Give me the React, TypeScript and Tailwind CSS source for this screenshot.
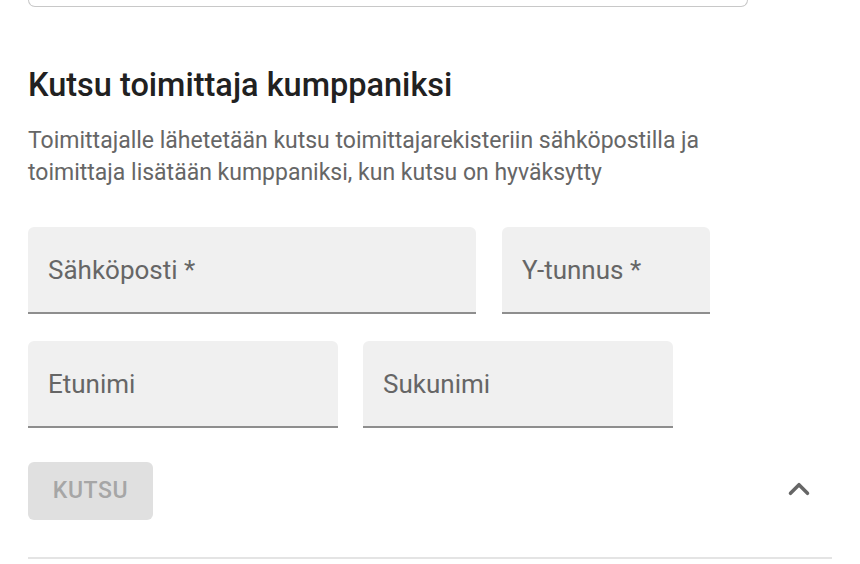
import { ChevronUp } from "lucide-react";

const Field = ({ label, className }: { label: string; className: string }) => (
  <div
    className={`h-[87px] bg-[#f0f0f0] rounded-t-[6px] border-b-2 border-[#8e8e8e] flex items-center px-[20px] ${className}`}
  >
    <span className="text-[26px] text-[#666666] leading-none">{label}</span>
  </div>
);

const App = () => {
  return (
    <div
      className="w-[860px] h-[564px] bg-white overflow-hidden relative"
      style={{ fontFamily: "Roboto, 'Liberation Sans', sans-serif" }}
    >
      <div className="px-[28px]">
        <div className="w-[720px] h-[8px] -mt-[1px] border border-t-0 border-[#c8c8c8] rounded-b-[7px]" />

        <h1 className="mt-[58px] text-[32.5px] leading-[40px] font-medium text-[#212121]">
          Kutsu toimittaja kumppaniksi
        </h1>
        <p className="mt-[20px] text-[23px] leading-[32px] text-[#666666]">
          Toimittajalle lähetetään kutsu toimittajarekisteriin sähköpostilla ja
          <br />
          toimittaja lisätään kumppaniksi, kun kutsu on hyväksytty
        </p>

        <div className="mt-[38px] flex gap-[26px]">
          <Field label="Sähköposti *" className="w-[448px]" />
          <Field label="Y-tunnus *" className="w-[208px]" />
        </div>
        <div className="mt-[27px] flex gap-[25px]">
          <Field label="Etunimi" className="w-[310px]" />
          <Field label="Sukunimi" className="w-[310px]" />
        </div>

        <div className="mt-[34px] flex items-center justify-between">
          <button
            disabled
            className="w-[125px] h-[58px] rounded-[6px] bg-[#e0e0e0] text-[#a6a6a6] text-[23px] font-medium tracking-[0.6px]"
          >
            KUTSU
          </button>
          <ChevronUp className="w-[34px] h-[34px] text-[#666666] mr-[16px] -mt-[4px]" strokeWidth={2.5} />
        </div>

        <div className="mt-[37px] h-[2px] bg-[#e4e4e4]" />
      </div>
    </div>
  );
};

export default App;
